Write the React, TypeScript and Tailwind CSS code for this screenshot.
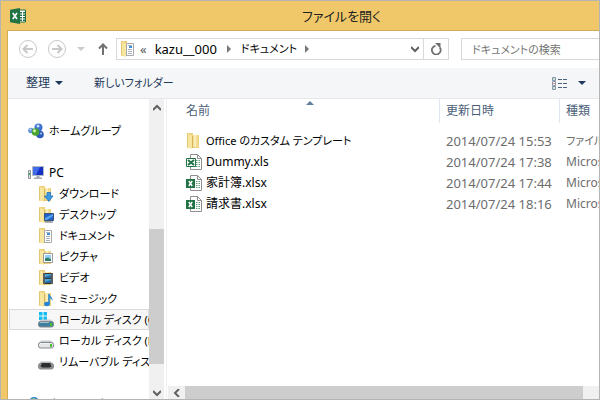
import type { ReactNode } from "react";

const ExcelLogo = () => (
  <svg width="16" height="16" viewBox="0 0 16 16" aria-hidden="true">
    <path d="M9 2h6.5v12H9z" fill="#fff" stroke="#217346" />
    <path d="M10 4h2v1.5h-2zM13 4h2v1.5h-2zM10 6.5h2V8h-2zM13 6.5h2V8h-2zM10 9h2v1.5h-2zM13 9h2v1.5h-2zM10 11.5h2V13h-2zM13 11.5h2V13h-2z" fill="#217346" />
    <path d="M0 1.7L10 0v16L0 14.3z" fill="#217346" />
    <path d="M2.800 5l4.200 6M7 5l-4.200 6" stroke="#fff" strokeWidth="1.600" />
  </svg>
);

const Folder = ({ children }: { children?: ReactNode }) => (
  <svg width="16" height="16" viewBox="0 0 16 16" className="shrink-0" aria-hidden="true">
    <path d="M1 0h6v2h6v13H1z" fill="#eed07a" />
    <path d="M6 2h6v12H6z" fill="#f3dd92" />
    <path d="M8 2h2v12H8z" fill="#faedb8" />
    <path d="M1 .5l5 2V16l-5-2z" fill="#f7e6a0" />
    <path d="M1.500 1v13" stroke="#e2c672" />
    <path d="M6.500 3v12" stroke="#d6b65c" />
    {children}
  </svg>
);

const DocFolder = () => (
  <Folder>
    <path d="M6.500 2.500h7v12h-7z" fill="#fff" stroke="#a8a8a8" />
    <path d="M8 4.500h4M8 8.500h4M8 10.500h4M8 12.500h4" stroke="#a9b4c2" />
    <path d="M9 5h3v2H9z" fill="#3c8fdc" />
  </Folder>
);

const DownloadFolder = () => (
  <Folder>
    <path d="M9 6.500h3.500V10H15l-4.200 5.500L6.500 10H9z" fill="#3d9be6" stroke="#1767b0" strokeWidth=".7" />
  </Folder>
);

const DesktopFolder = () => (
  <Folder>
    <path d="M6.500 6.500h9v7h-9z" fill="#1f62c8" stroke="#35517c" />
    <path d="M7 11l8-4v2l-6 4H7z" fill="#5ba4f2" />
    <path d="M7 15h8" stroke="#526b8d" />
  </Folder>
);

const PictureFolder = () => (
  <Folder>
    <path d="M5.500 4.500h9v9h-9z" fill="#fff" stroke="#999" />
    <path d="M7 6h6v6H7z" fill="#8fcdf2" />
    <path d="M7 12V9.500l3-1 3 2V12z" fill="#2f7d62" />
  </Folder>
);

const VideoFolder = () => (
  <Folder>
    <path d="M5 3h10v11H5z" fill="#333" />
    <path d="M7 4h6v4H7zM7 9h6v4H7z" fill="#4ba3dc" />
    <path d="M7 7l6-2v3H7zM7 12l6-2v3H7z" fill="#246a9c" />
    <path d="M6 3.500V14M14 3.500V14" stroke="#ddd" strokeDasharray="1 1" />
  </Folder>
);

const MusicFolder = () => (
  <Folder>
    <path d="M11 3v10" stroke="#1f7fd0" strokeWidth="1.500" />
    <path d="M11 2c0 3.500 4.500 4 3.500 8C14 8 12.500 7.500 11 7z" fill="#2f92e0" />
    <ellipse cx="9" cy="13" rx="2.800" ry="2.200" fill="#2483d6" />
  </Folder>
);

const HomeGroup = () => (
  <svg width="16" height="16" viewBox="0 0 16 16" className="shrink-0" aria-hidden="true">
    <circle cx="10.500" cy="4.500" r="4" fill="#3f74cf" />
    <circle cx="3" cy="7.500" r="2.800" fill="#5b8fdd" />
    <circle cx="12" cy="11.500" r="3.800" fill="#2c5cb8" />
    <circle cx="7.500" cy="9" r="3.800" fill="#4aa52c" />
    <circle cx="6.500" cy="7.800" r="1.600" fill="#c8eeb0" />
    <circle cx="10" cy="3" r="1.500" fill="#c8dbf8" />
    <circle cx="13" cy="10.500" r="1.100" fill="#9fc0ee" />
    <circle cx="2.500" cy="6.500" r="1" fill="#d4e3fa" />
  </svg>
);

const Computer = () => (
  <svg width="16" height="16" viewBox="0 0 16 16" className="shrink-0" aria-hidden="true">
    <path d="M4.500 1.500h11v9h-11z" fill="#1531c4" stroke="#b4bac2" />
    <path d="M5 2h7L8 10H5z" fill="#3f6bea" />
    <path d="M8.500 11h3v1.500h-3zM6 12.500h8V14H6z" fill="#a5abb3" />
    <path d="M.5 5.500h2v8h-2z" fill="#dfe3e6" stroke="#8d949b" />
    <path d="M1 8h1v2H1z" fill="#36b23a" />
  </svg>
);

const driveFill = { system: "#3f7f9f", local: "#e4e5e7", removable: "#8f9194" };

const Drive = ({ kind }: { kind: "system" | "local" | "removable" }) => (
  <svg width="16" height="16" viewBox="0 0 16 16" className="shrink-0" aria-hidden="true">
    {kind === "system" && <path d="M1 0h3.500v3.500H1zM5.500 0H9v3.500H5.500zM1 4.500h3.500V8H1zM5.500 4.500H9V8H5.500z" fill="#12bdf2" />}
    <path d="M3 7.500h10l2.500 3H.5z" fill={kind === "removable" ? "#b4b6b9" : "#c8ccd0"} />
    <rect x=".5" y="9.500" width="15" height="5.500" rx="2" fill={driveFill[kind]} stroke="#858a8e" />
    {kind === "removable" ? (
      <path d="M4 9h8l1.500 3.500-2 1h-7l-2-1z" fill="#2c2d2f" />
    ) : (
      <>
        <path d="M2 10.500h9" stroke="#fff" strokeOpacity=".5" />
        <path d="M12 11h2v3h-2z" fill="#43c531" />
      </>
    )}
  </svg>
);

const Network = () => (
  <svg width="16" height="16" viewBox="0 0 16 16" className="shrink-0" aria-hidden="true">
    <circle cx="6" cy="6" r="5" fill="#2f7fd6" />
    <path d="M2 5c1-3 4-3 5-3s-1 3-2 4-2 0-3-1z" fill="#6fd06a" />
    <path d="M8.500 7.500h7v5h-7z" fill="#2758cf" stroke="#aaa" />
  </svg>
);

const ExcelFile = ({ old }: { old?: boolean }) => (
  <svg width="16" height="16" viewBox="0 0 16 16" className="shrink-0" aria-hidden="true">
    <path d="M4.500.5h7l4 4v11h-11z" fill="#fff" stroke="#909090" />
    <path d="M11.500.5v4h4" fill="none" stroke="#909090" />
    <path d="M10 6.500h1.500M12.500 6.500H14M10 8.500h1.500M12.500 8.500H14M10 10.500h1.500M12.500 10.500H14M10 12.500h1.500M12.500 12.500H14" stroke="#5f9c7a" />
    {old ? (
      <>
        <path d="M.5 4.500h9v8h-9z" fill="#fff" stroke="#217346" />
        <path d="M2 6l6 5M8 6l-6 5" stroke="#217346" strokeWidth="2" />
      </>
    ) : (
      <>
        <path d="M0 4h9v9H0z" fill="#217346" />
        <path d="M2.800 6l3.400 5M6.200 6l-3.400 5" stroke="#fff" strokeWidth="1.400" />
      </>
    )}
  </svg>
);

const Caret = ({ className }: { className?: string }) => (
  <svg width="8" height="4" viewBox="0 0 8 4" className={className} aria-hidden="true">
    <path d="M0 0h8L4 4z" fill="currentColor" />
  </svg>
);

const Crumb = () => (
  <svg width="4" height="8" viewBox="0 0 4 8" className="shrink-0 text-[#777]" aria-hidden="true">
    <path d="M0 0l4 4-4 4z" fill="currentColor" />
  </svg>
);

const Chevron = ({ d }: { d: string }) => (
  <svg width="8" height="8" viewBox="0 0 8 8" className="text-[#606060]" aria-hidden="true">
    <path d={d} fill="none" stroke="currentColor" strokeWidth="2" />
  </svg>
);

const places = [
  { label: "ダウンロード", icon: <DownloadFolder /> },
  { label: "デスクトップ", icon: <DesktopFolder /> },
  { label: "ドキュメント", icon: <DocFolder /> },
  { label: "ピクチャ", icon: <PictureFolder /> },
  { label: "ビデオ", icon: <VideoFolder /> },
  { label: "ミュージック", icon: <MusicFolder /> },
  { label: "ローカル ディスク (C:)", icon: <Drive kind="system" />, selected: true },
  { label: "ローカル ディスク (E:)", icon: <Drive kind="local" /> },
  { label: "リムーバブル ディスク (F:)", icon: <Drive kind="removable" /> },
];

const files = [
  { name: "Office のカスタム テンプレート", date: "2014/07/24 15:53", type: "ファイル フォルダー", icon: <Folder />, folder: true },
  { name: "Dummy.xls", date: "2014/07/24 17:38", type: "Microsoft Excel", icon: <ExcelFile old /> },
  { name: "家計簿.xlsx", date: "2014/07/24 17:44", type: "Microsoft Excel", icon: <ExcelFile /> },
  { name: "請求書.xlsx", date: "2014/07/24 18:16", type: "Microsoft Excel", icon: <ExcelFile /> },
];

function TreeItem({ label, icon, selected, child }: { label: string; icon: ReactNode; selected?: boolean; child?: boolean }) {
  return (
    <button
      className={`flex h-[21px] w-full shrink-0 items-center gap-[5px] border whitespace-nowrap ${child ? "pl-7" : "pl-[18px]"} ${
        selected ? "border-[#dadada] bg-[#f7f7f7]" : "border-transparent"
      }`}
    >
      {icon}
      <span className={label === "PC" ? "text-[12px]" : "text-[11px]"}>{label}</span>
    </button>
  );
}

export default function App() {
  return (
    <div className="flex h-screen flex-col overflow-hidden border border-[#b4b4b4] bg-[#f0c869] font-['Noto_Sans','Noto_Sans_CJK_JP',sans-serif] text-[12px] leading-4 text-black [font-feature-settings:'palt']">
      <header className="flex h-[29px] shrink-0 items-center pl-[9px]">
        <ExcelLogo />
        <h1 className="flex-1 pl-[58px] text-center text-[13px] text-[#222]">ファイルを開く</h1>
      </header>

      <div className="ml-1.5 flex min-h-0 flex-1 flex-col border-t border-l border-[#d3ac55] bg-white">
        <div className="flex h-[37px] shrink-0 items-start pt-[7px] pl-2.5">
          <div className="flex h-[22px] shrink-0 items-center">
            <button aria-label="戻る" className="text-[#c8c8c8]">
              <svg width="20" height="20" viewBox="0 0 20 20" fill="none" stroke="currentColor">
                <circle cx="10" cy="10" r="8.500" />
                <path d="M15 10H6M9.500 6L5.500 10l4 4" strokeWidth="2" />
              </svg>
            </button>
            <button aria-label="進む" className="ml-[9px] text-[#c8c8c8]">
              <svg width="20" height="20" viewBox="0 0 20 20" fill="none" stroke="currentColor">
                <circle cx="10" cy="10" r="8.500" />
                <path d="M5 10h9M10.500 6l4 4-4 4" strokeWidth="2" />
              </svg>
            </button>
            <button aria-label="履歴" className="ml-2.5 text-[#ccc]">
              <Caret />
            </button>
            <button aria-label="上へ" className="ml-[13px] text-[#707070]">
              <svg width="10" height="12" viewBox="0 0 10 12" fill="none" stroke="currentColor" strokeWidth="2">
                <path d="M5 12V1.500M1 5.500l4-4 4 4" />
              </svg>
            </button>
          </div>

          <div className="ml-2 flex h-[22px] min-w-0 flex-1 items-center border border-[#d9d9d9] pl-[3px]">
            <DocFolder />
            <span className="ml-1 text-[13px] text-[#555]">«</span>
            <button className="ml-2 text-[13px] whitespace-nowrap">kazu__000</button>
            <span className="ml-2.5">
              <Crumb />
            </span>
            <button className="ml-2.5 text-[11px] whitespace-nowrap">ドキュメント</button>
            <span className="ml-2">
              <Crumb />
            </span>
            <button aria-label="以前の場所" className="mr-1 ml-auto">
              <Chevron d="M0 2l4 4 4-4" />
            </button>
          </div>
          <button aria-label="更新" className="-ml-px flex h-[22px] w-[26px] shrink-0 items-center justify-center border border-[#d9d9d9] text-[#707070]">
            <svg width="12" height="12" viewBox="0 0 12 12" fill="none" aria-hidden="true">
              <path d="M9.800 4.500A4.400 4.400 0 1 1 5.500 2.800" stroke="currentColor" strokeWidth="1.800" />
              <path d="M5 0h5.500v5.500z" fill="currentColor" />
            </svg>
          </button>
          <input
            type="search"
            aria-label="ドキュメントの検索"
            placeholder="ドキュメントの検索"
            className="ml-3 h-[22px] w-[138px] shrink-0 border border-r-0 border-[#d9d9d9] pl-2.5 text-[11px] placeholder:text-[#757575]"
          />
        </div>

        <div className="flex h-[31px] shrink-0 items-center border-b border-[#e6e8ec] bg-[#f5f6f7] pr-[13px] pl-[18px] text-[#1e395b]">
          <button className="flex items-center gap-[5px]">
            整理
            <Caret />
          </button>
          <button className="ml-[31px] text-[11px]">新しいフォルダー</button>
          <button aria-label="表示方法" className="ml-auto flex items-center gap-[11px]">
            <svg width="15" height="13" viewBox="0 0 15 13" fill="none" aria-hidden="true">
              <path d="M.5.500h3v3h-3zM.5 4.500h3v4h-3zM.5 9.500h3v3h-3z" fill="#fff" stroke="#8795a8" />
              <path d="M1.500 2h1M1.500 11h1" stroke="#3c8a4c" />
              <path d="M1.500 6.500h1" stroke="#d02020" />
              <path d="M6 2.500h4M11 2.500h4M6 6.500h4M11 6.500h4M6 10.500h4M11 10.500h4" stroke="#4c6380" />
            </svg>
            <Caret />
          </button>
        </div>

        <div className="flex min-h-0 flex-1">
          <nav className="flex w-[141px] shrink-0 flex-col overflow-hidden pt-[21px] pl-px">
            <TreeItem label="ホームグループ" icon={<HomeGroup />} />
            <div className="mt-[21px]">
              <TreeItem label="PC" icon={<Computer />} />
              {places.map((p) => (
                <TreeItem key={p.label} child {...p} />
              ))}
            </div>
            <div className="mt-[21px]">
              <TreeItem label="ネットワーク" icon={<Network />} />
            </div>
          </nav>

          <div className="flex w-[15px] shrink-0 flex-col items-center bg-[#f0f0f0]">
            <div className="flex h-[17px] items-center">
              <Chevron d="M0 6l4-4 4 4" />
            </div>
            <div className="flex w-full flex-1 flex-col">
              <div className="flex-[113]" />
              <div className="w-full flex-[135] bg-[#cdcdcd]" />
              <div className="flex-[23]" />
            </div>
            <div className="flex h-3 items-center">
              <Chevron d="M0 2l4 4 4-4" />
            </div>
          </div>

          <main className="ml-0.5 flex min-w-0 flex-1 flex-col border-l border-[#f0f0f0]">
            <div className="min-h-0 flex-1 overflow-hidden pl-[13px]">
              <table className="w-[540px] table-fixed text-left whitespace-nowrap text-[#6d6d6d]">
                <colgroup>
                  <col className="w-[259px]" />
                  <col className="w-[120px]" />
                  <col />
                </colgroup>
                <thead>
                  <tr className="h-[31px] align-top text-[#4c607a]">
                    <th className="relative pt-1 pl-1.5 font-normal">
                      名前
                      <Caret className="absolute top-0.5 left-1/2 -ml-1 rotate-180 text-[#5e7f9e]" />
                    </th>
                    <th className="p-0 font-normal">
                      <div className="h-6 border-l border-[#dfe6ef] pt-1 pl-1.5">更新日時</div>
                    </th>
                    <th className="p-0 font-normal">
                      <div className="h-6 border-l border-[#dfe6ef] pt-1 pl-1.5">種類</div>
                    </th>
                  </tr>
                </thead>
                <tbody>
                  {files.map((f) => (
                    <tr key={f.name} className="h-[21px]">
                      <td className="p-0 pl-1.5 text-black">
                        <div className="flex items-center gap-1">
                          {f.icon}
                          <span className={f.folder ? "text-[11px]" : "text-[12px]"}>{f.name}</span>
                        </div>
                      </td>
                      <td className="p-0 pl-[7px] text-[13px]">{f.date}</td>
                      <td className={`p-0 pl-[7px] ${f.folder ? "text-[11px]" : "text-[12px]"}`}>{f.type}</td>
                    </tr>
                  ))}
                </tbody>
              </table>
            </div>
            <div className="ml-px flex h-[13px] shrink-0 bg-[#f0f0f0]">
              <div className="flex w-[17px] items-center justify-center">
                <Chevron d="M6 0L2 4l4 4" />
              </div>
              <div className="flex-1 bg-[#cdcdcd]" />
              <div className="w-4" />
            </div>
          </main>
        </div>
      </div>
    </div>
  );
}
